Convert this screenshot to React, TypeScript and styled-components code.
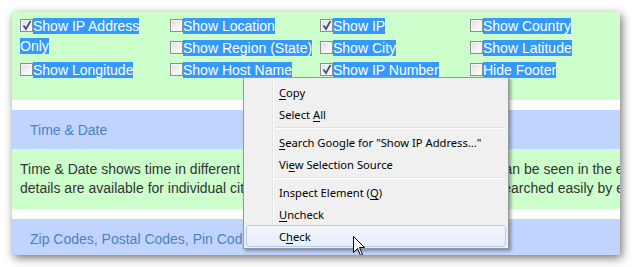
import React from "react";
import styled, { createGlobalStyle } from "styled-components";

const Global = createGlobalStyle`
  html, body { margin: 0; padding: 0; background: #ffffff; overflow: hidden; }
  body { width: 632px; height: 267px; }
`;

const Stage = styled.div`
  padding: 12px;
  width: 632px;
  height: 267px;
  box-sizing: border-box;
`;

const Window = styled.div`
  position: relative;
  width: 608px;
  height: 243px;
  overflow: hidden;
  background: #ffffff;
  box-shadow: 2px 3px 9px rgba(0, 0, 0, 0.55);
  font-family: "Liberation Sans", Arial, sans-serif;
  font-size: 14px;
`;

const Options = styled.div`
  background: #ccffcc;
  height: 88px;
  box-sizing: border-box;
  padding: 4px 0 0 8px;
  display: grid;
  grid-template-columns: repeat(4, 150px);
  grid-auto-rows: 22px;
  line-height: 20px;
  white-space: nowrap;
`;

const Option = styled.div<{ $span?: number }>`
  grid-row: span ${(p) => p.$span ?? 1};
  white-space: ${(p) => (p.$span ? "normal" : "nowrap")};
  width: 150px;
`;

const Box = styled.span`
  display: inline-block;
  width: 13px;
  height: 13px;
  box-sizing: border-box;
  border: 1px solid #8f8f8f;
  background: linear-gradient(135deg, #dcdcdc 0%, #f4f4f4 60%, #ffffff 100%);
  box-shadow: inset 0 0 0 1px #f4f4f4;
  vertical-align: -1px;
  position: relative;
  svg { position: absolute; left: 1px; top: 0px; }
`;

const Sel = styled.span`
  background: #3399ff;
  color: #ffffff;
`;

const Gap = styled.div`
  height: 10px;
  background: #ffffff;
`;

const Band = styled.div`
  background: #c1d4fd;
  height: 39px;
  padding-left: 18px;
  display: flex;
  align-items: center;
  color: #4a82c6;
  white-space: nowrap;
`;

const Para = styled.div`
  background: #ccffcc;
  height: 60px;
  box-sizing: border-box;
  padding: 11px 0 0 8px;
  color: #333333;
  line-height: 19px;
  white-space: nowrap;
`;

const Menu = styled.div`
  position: absolute;
  left: 231px;
  top: 65px;
  width: 266px;
  height: 172px;
  box-sizing: border-box;
  border: 1px solid #979797;
  background: #f0f0f0;
  box-shadow: 2px 2px 3px rgba(0, 0, 0, 0.35);
  padding: 3px 2px 2px 2px;
  font-family: "Noto Sans", "Open Sans", sans-serif;
  font-size: 11.2px;
  color: #000000;
  &::before {
    content: "";
    position: absolute;
    left: 28px;
    top: 2px;
    bottom: 2px;
    width: 1px;
    background: #e2e3e3;
    border-right: 1px solid #ffffff;
  }
`;

const Item = styled.div<{ $hot?: boolean }>`
  position: relative;
  height: 22px;
  box-sizing: border-box;
  padding-left: 32px;
  display: flex;
  align-items: center;
  border: 1px solid ${(p) => (p.$hot ? "#aecff7" : "transparent")};
  border-radius: 3px;
  background: ${(p) =>
    p.$hot ? "linear-gradient(#f2f6fc, #e6eefb)" : "transparent"};
  u { text-decoration: underline; text-underline-offset: 2px; }
`;

const Separator = styled.div`
  height: 6px;
  margin-left: 29px;
  display: flex;
  flex-direction: column;
  justify-content: center;
  &::before {
    content: "";
    height: 1px;
    background: #e0e0e0;
  }
  &::after {
    content: "";
    height: 1px;
    background: #ffffff;
  }
`;

const Cursor = styled.svg`
  position: absolute;
  left: 341px;
  top: 224px;
`;

const Check = () => (
  <svg width="10" height="11" viewBox="0 0 10 11">
    <path
      d="M1.5 5.5 L4 9 L8.5 1"
      fill="none"
      stroke="#3d5487"
      strokeWidth="1.8"
    />
  </svg>
);

const CB = ({ on }: { on?: boolean }) => <Box>{on && <Check />}</Box>;

export default function App() {
  return (
    <>
      <Global />
      <Stage>
        <Window>
          <Options>
            <Option $span={2}>
              <CB on />
              <Sel>Show IP Address Only</Sel>
            </Option>
            <Option>
              <CB />
              <Sel>Show Location</Sel>
            </Option>
            <Option>
              <CB on />
              <Sel>Show IP</Sel>
            </Option>
            <Option>
              <CB />
              <Sel>Show Country</Sel>
            </Option>
            <Option>
              <CB />
              <Sel>Show Region (State)</Sel>
            </Option>
            <Option>
              <CB />
              <Sel>Show City</Sel>
            </Option>
            <Option>
              <CB />
              <Sel>Show Latitude</Sel>
            </Option>
            <Option>
              <CB />
              <Sel>Show Longitude</Sel>
            </Option>
            <Option>
              <CB />
              <Sel>Show Host Name</Sel>
            </Option>
            <Option>
              <CB on />
              <Sel>Show IP Number</Sel>
            </Option>
            <Option>
              <CB />
              <Sel>Hide Footer</Sel>
            </Option>
          </Options>
          <Gap />
          <Band>Time &amp; Date</Band>
          <Para>
            <div>
              Time &amp; Date shows time in different cities around the world. The current time can be seen in the easiest way.
            </div>
            <div>
              details are available for individual cities and nations around the world can be searched easily by entering a name.
            </div>
          </Para>
          <Gap />
          <Band>Zip Codes, Postal Codes, Pin Codes &amp; Area Codes</Band>

          <Menu>
            <Item><span><u>C</u>opy</span></Item>
            <Item><span>Select <u>A</u>ll</span></Item>
            <Separator />
            <Item><span><u>S</u>earch Google for "Show IP Address..."</span></Item>
            <Item><span>Vi<u>e</u>w Selection Source</span></Item>
            <Separator />
            <Item><span>Inspect Element (<u>Q</u>)</span></Item>
            <Item><span><u>U</u>ncheck</span></Item>
            <Item $hot><span>C<u>h</u>eck</span></Item>
          </Menu>
          <Cursor width="13" height="21" viewBox="0 0 13 21">
            <path
              d="M0.5 0.5 L0.5 16.5 L4.5 12.5 L7.5 19.5 L9.5 18.5 L6.5 11.5 L11.5 11.5 Z"
              fill="#ffffff"
              stroke="#000000"
              strokeWidth="1"
              strokeLinejoin="miter"
            />
          </Cursor>
        </Window>
      </Stage>
    </>
  );
}
